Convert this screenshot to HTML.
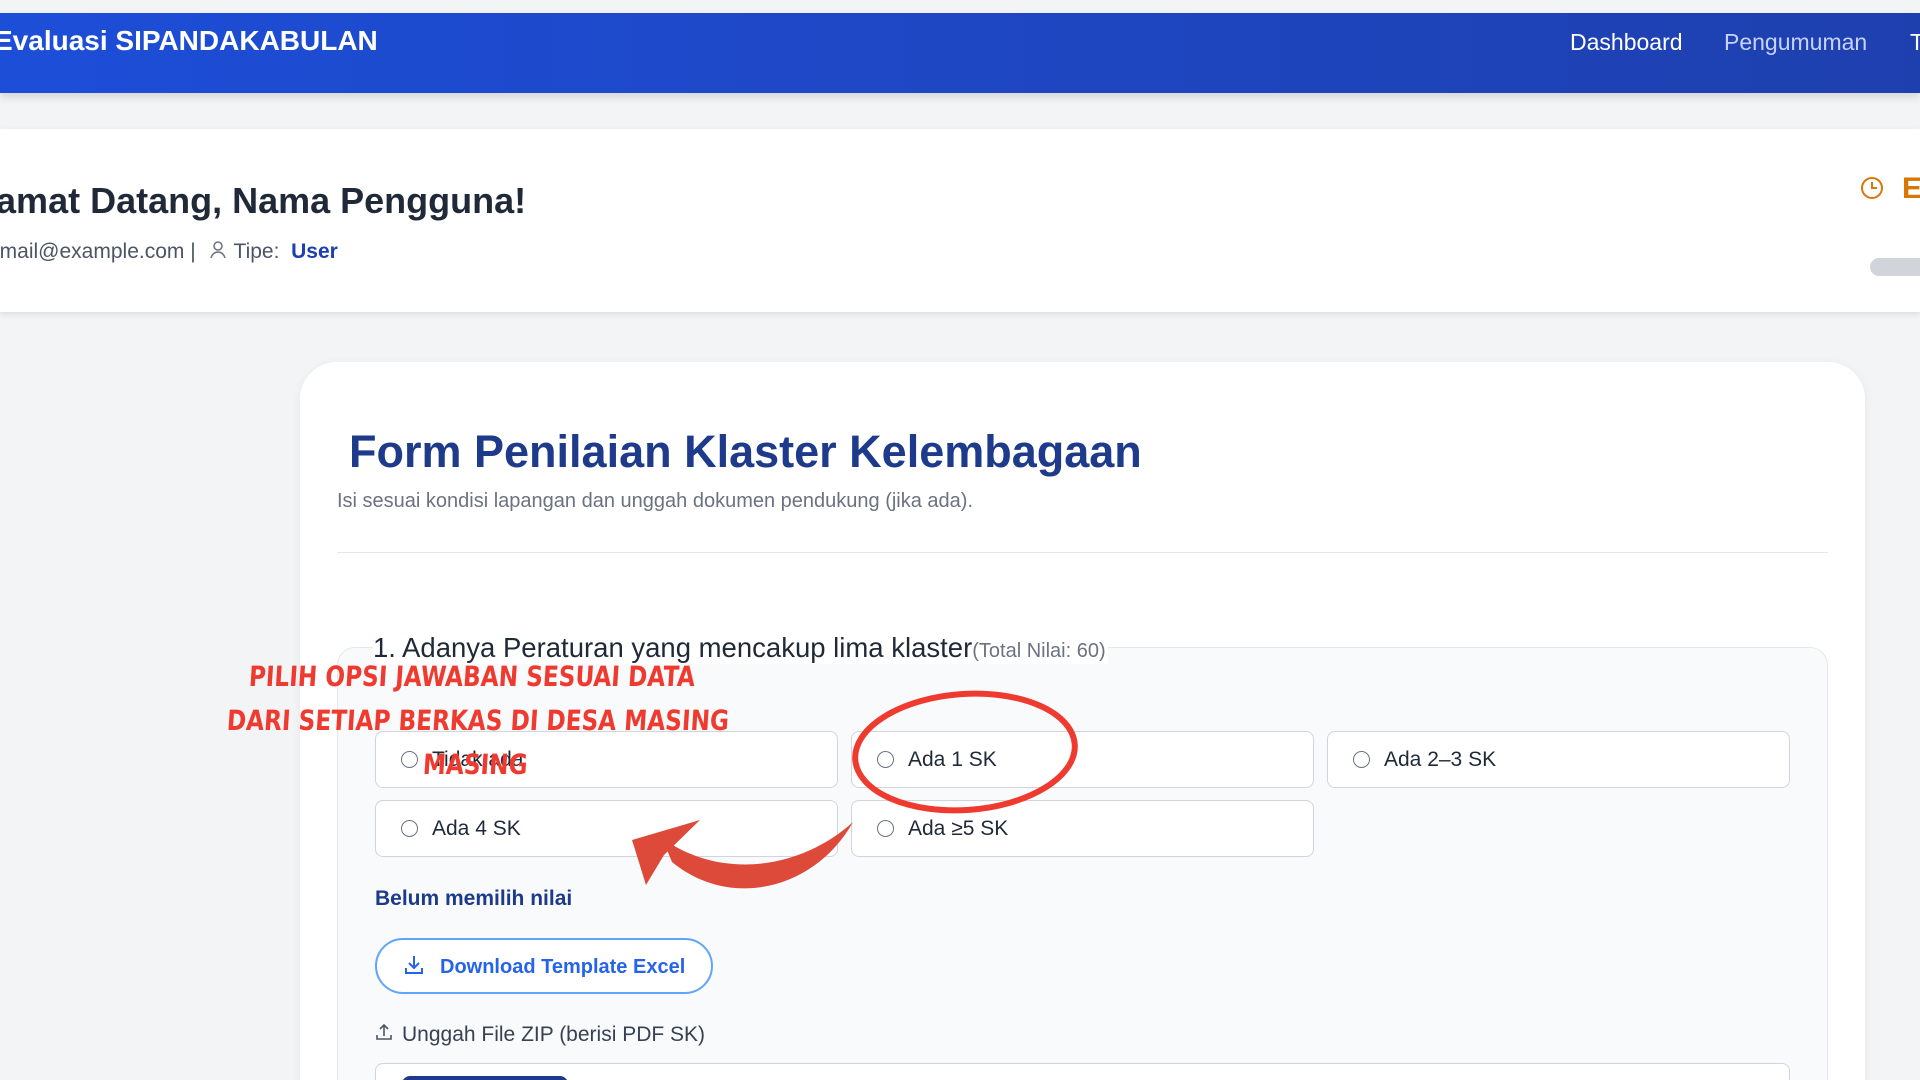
<!DOCTYPE html>
<html style="height:1080px;overflow:hidden"><head><meta charset="utf-8"><style>
*{margin:0;padding:0;box-sizing:border-box}
body{width:1920px;height:1080px;overflow:hidden;background:#f3f4f6;font-family:"Liberation Sans",sans-serif}
#w{position:relative;width:1920px;height:1080px;overflow:hidden}
.abs{position:absolute;white-space:nowrap}
.nav{position:absolute;left:0;top:13px;width:1920px;height:80px;background:linear-gradient(90deg,#1d4ed8,#1e40af);box-shadow:0 4px 8px rgba(0,0,0,.12)}
.hdr{position:absolute;left:0;top:129px;width:1920px;height:183px;background:#fff;box-shadow:0 2px 6px rgba(0,0,0,.1)}
.card{position:absolute;left:300px;top:362px;width:1565px;height:800px;background:#fff;border-radius:37px;box-shadow:0 2px 10px rgba(0,0,0,.06)}
.qbox{position:absolute;left:337px;top:647px;width:1491px;height:500px;background:#f8fafc;border:1px solid #e5e7eb;border-radius:18px}
.opt{position:absolute;height:57px;width:463px;background:#fff;border:1.5px solid #d1d5db;border-radius:8px}
.opt i{position:absolute;left:25px;top:19px;width:17px;height:17px;border:1.5px solid #6b7280;border-radius:50%}
.opt span{position:absolute;left:56px;top:16px;font-size:21px;color:#1f2937}
.ann{position:absolute;color:#ef3b2f;font-family:"DejaVu Sans Condensed","Liberation Sans Narrow",sans-serif;font-weight:bold;font-size:28px;white-space:nowrap;transform-origin:left top;transform:scaleX(0.92) skewX(-4deg)}
</style></head><body><div id="w">
<div class="nav"></div>
<div class="abs" style="left:-6px;top:25px;font-size:28px;font-weight:bold;color:#fff">Evaluasi SIPANDAKABULAN</div>
<div class="abs" style="left:1570px;top:29px;font-size:23px;color:#fff">Dashboard</div>
<div class="abs" style="left:1724px;top:29px;font-size:23px;color:#c7d2fe">Pengumuman</div>
<div class="abs" style="left:1910px;top:29px;font-size:23px;color:#fff">T</div>
<div class="hdr"></div>
<div class="abs" style="left:-58px;top:180px;font-size:36px;font-weight:bold;color:#1f2937">Selamat Datang, Nama Pengguna!</div>
<div class="abs" style="left:-12px;top:240px;font-size:21px;color:#4b5563">email@example.com | <svg width="20" height="20" viewBox="0 0 20 20" style="vertical-align:-2px;margin:0 6px"><circle cx="10" cy="6" r="4" fill="none" stroke="#6b7280" stroke-width="1.5"/><path d="M3 18c1-4 4-6 7-6s6 2 7 6" fill="none" stroke="#6b7280" stroke-width="1.5"/></svg>Tipe: &nbsp;<b style="color:#1e40af;font-weight:bold">User</b></div>
<svg class="abs" style="left:1860px;top:176px" width="24" height="24" viewBox="0 0 24 24"><circle cx="12" cy="12" r="10" fill="none" stroke="#d97706" stroke-width="2"/><path d="M12 6v6h5" fill="none" stroke="#d97706" stroke-width="2"/></svg>
<div class="abs" style="left:1902px;top:172px;font-size:30px;font-weight:bold;color:#d97706">Ev</div>
<div class="abs" style="left:1870px;top:258px;width:60px;height:18px;border-radius:9px;background:#d1d5db"></div>
<div class="card"></div>
<div class="abs" style="left:349px;top:426px;font-size:45px;font-weight:bold;color:#1e3a8a">Form Penilaian Klaster Kelembagaan</div>
<div class="abs" style="left:337px;top:490px;font-size:20px;color:#6b7280">Isi sesuai kondisi lapangan dan unggah dokumen pendukung (jika ada).</div>
<div class="abs" style="left:337px;top:552px;width:1491px;height:1px;background:#e5e7eb"></div>
<div class="qbox"></div>
<div class="abs" style="left:373px;top:632px;font-size:27.5px;color:#1f2937;background:#fff;padding-right:2px">1. Adanya Peraturan yang mencakup lima klaster<span style="font-size:20px;color:#6b7280">(Total Nilai: 60)</span></div>
<div class="opt" style="left:375px;top:731px"><i></i><span>Tidak ada</span></div>
<div class="opt" style="left:851px;top:731px"><i></i><span>Ada 1 SK</span></div>
<div class="opt" style="left:1327px;top:731px"><i></i><span>Ada 2–3 SK</span></div>
<div class="opt" style="left:375px;top:800px"><i></i><span>Ada 4 SK</span></div>
<div class="opt" style="left:851px;top:800px"><i></i><span>Ada ≥5 SK</span></div>
<div class="abs" style="left:375px;top:887px;font-size:21px;font-weight:bold;color:#1e3a8a">Belum memilih nilai</div>
<div class="abs" style="left:375px;top:938px;width:338px;height:56px;border:2px solid #60a5fa;border-radius:28px;background:#fff"></div>
<svg class="abs" style="left:402px;top:953px" width="24" height="24" viewBox="0 0 24 24"><path d="M12 3v12M7 10l5 5 5-5M4 15v5h16v-5" fill="none" stroke="#2563eb" stroke-width="2"/></svg>
<div class="abs" style="left:440px;top:956px;font-size:20px;font-weight:bold;color:#2563eb">Download Template Excel</div>
<svg class="abs" style="left:374px;top:1022px" width="20" height="20" viewBox="0 0 20 20"><path d="M10 14V3M6 7l4-4 4 4M3 13v4h14v-4" fill="none" stroke="#4b5563" stroke-width="1.6"/></svg>
<div class="abs" style="left:402px;top:1023px;font-size:21px;color:#374151">Unggah File ZIP (berisi PDF SK)</div>
<div class="abs" style="left:375px;top:1063px;width:1415px;height:40px;border:1.5px solid #d1d5db;border-radius:8px;background:#fff"></div>
<div class="abs" style="left:402px;top:1076px;width:166px;height:30px;border-radius:8px;background:#1e3a8a"></div>
<div class="ann" style="left:250px;top:660px">PILIH OPSI JAWABAN SESUAI DATA</div>
<div class="ann" style="left:228px;top:704px">DARI SETIAP BERKAS DI DESA MASING</div>
<div class="ann" style="left:424px;top:748px">MASING</div>
<svg class="abs" style="left:0;top:0" width="1920" height="1080">
<ellipse cx="965" cy="752" rx="110" ry="58" transform="rotate(-4 965 752)" fill="none" stroke="#ef3b2f" stroke-width="6"/>
<path d="M853 822 C 815 890 730 910 672 862 L 662 838 C 720 880 800 870 853 822 Z" fill="#dd4a3a"/>
<path d="M700 820 L 632 840 L 646 885 L 664 855 Z" fill="#dd4a3a"/>
</svg>
</div></body></html>
